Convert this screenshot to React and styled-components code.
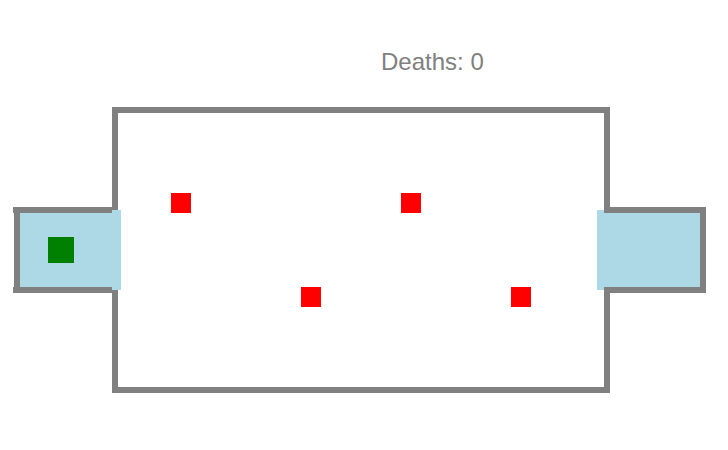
import styled, { createGlobalStyle } from 'styled-components';

const GlobalStyle = createGlobalStyle`
  html, body {
    margin: 0;
    padding: 0;
    background: #ffffff;
  }
`;

const HEADER_H = 77;

// main room walls, drawn first
const roomWalls = [
  { x: 112, y: 107, w: 498, h: 6 },
  { x: 112, y: 387, w: 498, h: 6 },
  { x: 112, y: 107, w: 6, h: 103 },
  { x: 112, y: 290, w: 6, h: 103 },
  { x: 604, y: 107, w: 6, h: 103 },
  { x: 604, y: 290, w: 6, h: 103 },
];

// start / finish zones, drawn over the room walls
const zones = [
  { x: 20, y: 210, w: 101, h: 80 },
  { x: 597, y: 210, w: 103, h: 80 },
];

// walls of the two side boxes, drawn on top
const boxWalls = [
  { x: 13, y: 207, w: 99, h: 6 },
  { x: 13, y: 287, w: 99, h: 6 },
  { x: 14, y: 207, w: 6, h: 86 },
  { x: 604, y: 207, w: 102, h: 6 },
  { x: 604, y: 287, w: 102, h: 6 },
  { x: 700, y: 207, w: 6, h: 86 },
];

const enemies = [
  { x: 171, y: 193 },
  { x: 401, y: 193 },
  { x: 301, y: 287 },
  { x: 511, y: 287 },
];

const player = { x: 48, y: 237, size: 26 };

function App() {
  const deaths = 0;

  return (
    <Page>
      <GlobalStyle />
      <Header>
        <Score>Deaths: {deaths}</Score>
      </Header>
      <Board viewBox={`0 ${HEADER_H} 728 ${450 - HEADER_H}`} width="728" height={450 - HEADER_H}>
        {roomWalls.map((r, i) => (
          <rect key={'w' + i} x={r.x} y={r.y} width={r.w} height={r.h} fill="#808080" />
        ))}
        {zones.map((z, i) => (
          <rect key={'z' + i} x={z.x} y={z.y} width={z.w} height={z.h} fill="#add8e6" />
        ))}
        {boxWalls.map((r, i) => (
          <rect key={'b' + i} x={r.x} y={r.y} width={r.w} height={r.h} fill="#808080" />
        ))}
        <rect x={player.x} y={player.y} width={player.size} height={player.size} fill="#008000" />
        {enemies.map((e, i) => (
          <rect key={'e' + i} x={e.x} y={e.y} width="20" height="20" fill="#ff0000" />
        ))}
      </Board>
    </Page>
  );
}

export default App;

/***************************************************************
                        Styled Components
***************************************************************/
const Page = styled.div`
  width: 728px;
  height: 450px;
  display: flex;
  flex-direction: column;
  overflow: hidden;
`;

const Header = styled.div`
  height: ${HEADER_H}px;
  box-sizing: border-box;
  padding: 50px 0 0 381px;
`;

const Score = styled.div`
  font-family: "Liberation Sans", Arial, sans-serif;
  font-size: 24px;
  line-height: 24px;
  color: #808080;
  white-space: nowrap;
`;

const Board = styled.svg`
  display: block;
  flex: none;
  shape-rendering: crispEdges;
`;
